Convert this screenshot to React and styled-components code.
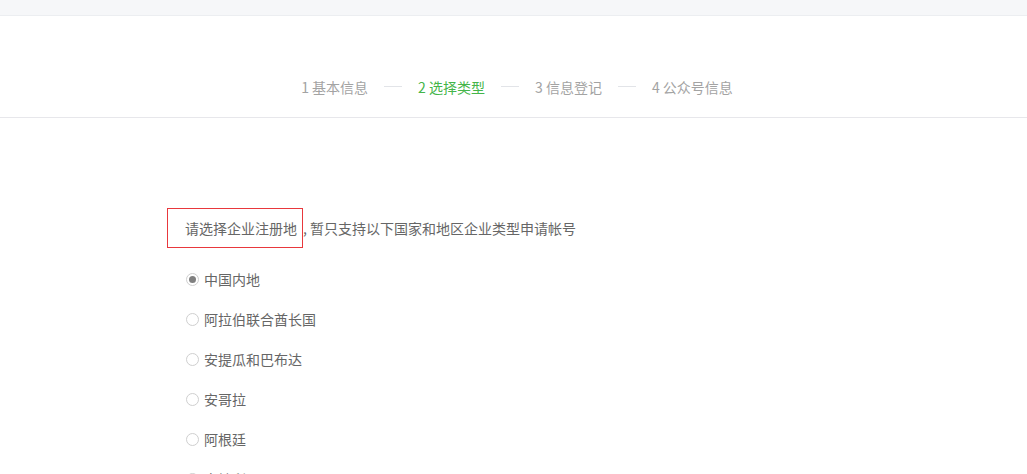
import React from "react";
import styled, { createGlobalStyle } from "styled-components";

const Global = createGlobalStyle`
  html, body { margin: 0; padding: 0; background: #fff; }
  body {
    font-family: "Noto Sans CJK SC", "Noto Sans", sans-serif;
    font-size: 14px;
    color: #666;
    overflow: hidden;
  }
`;

const TopBar = styled.div`
  height: 15px;
  background: #f6f7f9;
  border-bottom: 1px solid #eceef1;
`;

const Header = styled.div`
  height: 102px;
  box-sizing: border-box;
  border-bottom: 1px solid #e7e7eb;
  display: flex;
  justify-content: center;
  align-items: flex-end;
  padding: 0 0 20px 7px;
`;

const Step = styled.span`
  line-height: 20px;
  color: ${(p) => (p.$active ? "#44b549" : "#a3a3a3")};
  white-space: nowrap;
`;

const Divider = styled.span`
  width: 18px;
  height: 1px;
  background: #e2e4e8;
  margin: 0 16px 10px;
`;

const Content = styled.div`
  padding: 90px 0 0 167px;
`;

const Title = styled.div`
  display: flex;
  align-items: center;
  height: 40px;
  color: #666;
`;

const Marked = styled.span`
  box-sizing: border-box;
  height: 40px;
  line-height: 38px;
  border: 1px solid #e8383d;
  padding: 0 5px 0 17px;
`;

const Rest = styled.span`
  line-height: 38px;
`;

const List = styled.ul`
  list-style: none;
  margin: 11px 0 0;
  padding: 0 0 0 19px;
`;

const Item = styled.li`
  height: 40px;
  display: flex;
  align-items: center;
  gap: 5px;
  color: #666;
`;

const Radio = styled.span`
  box-sizing: border-box;
  width: 13px;
  height: 13px;
  border-radius: 50%;
  border: 1px solid #cfcfcf;
  display: flex;
  align-items: center;
  justify-content: center;
  flex-shrink: 0;
  &::after {
    content: "";
    width: 7px;
    height: 7px;
    border-radius: 50%;
    background: ${(p) => (p.$checked ? "#808080" : "transparent")};
  }
`;

const steps = ["1 基本信息", "2 选择类型", "3 信息登记", "4 公众号信息"];
const regions = ["中国内地", "阿拉伯联合酋长国", "安提瓜和巴布达", "安哥拉", "阿根廷", "奥地利"];

export default function App() {
  return (
    <>
      <Global />
      <TopBar />
      <Header>
        {steps.map((s, i) => (
          <React.Fragment key={s}>
            {i > 0 && <Divider />}
            <Step $active={i === 1}>{s}</Step>
          </React.Fragment>
        ))}
      </Header>
      <Content>
        <Title>
          <Marked>请选择企业注册地</Marked>
          <Rest>, 暂只支持以下国家和地区企业类型申请帐号</Rest>
        </Title>
        <List>
          {regions.map((r, i) => (
            <Item key={r}>
              <Radio $checked={i === 0} />
              {r}
            </Item>
          ))}
        </List>
      </Content>
    </>
  );
}
